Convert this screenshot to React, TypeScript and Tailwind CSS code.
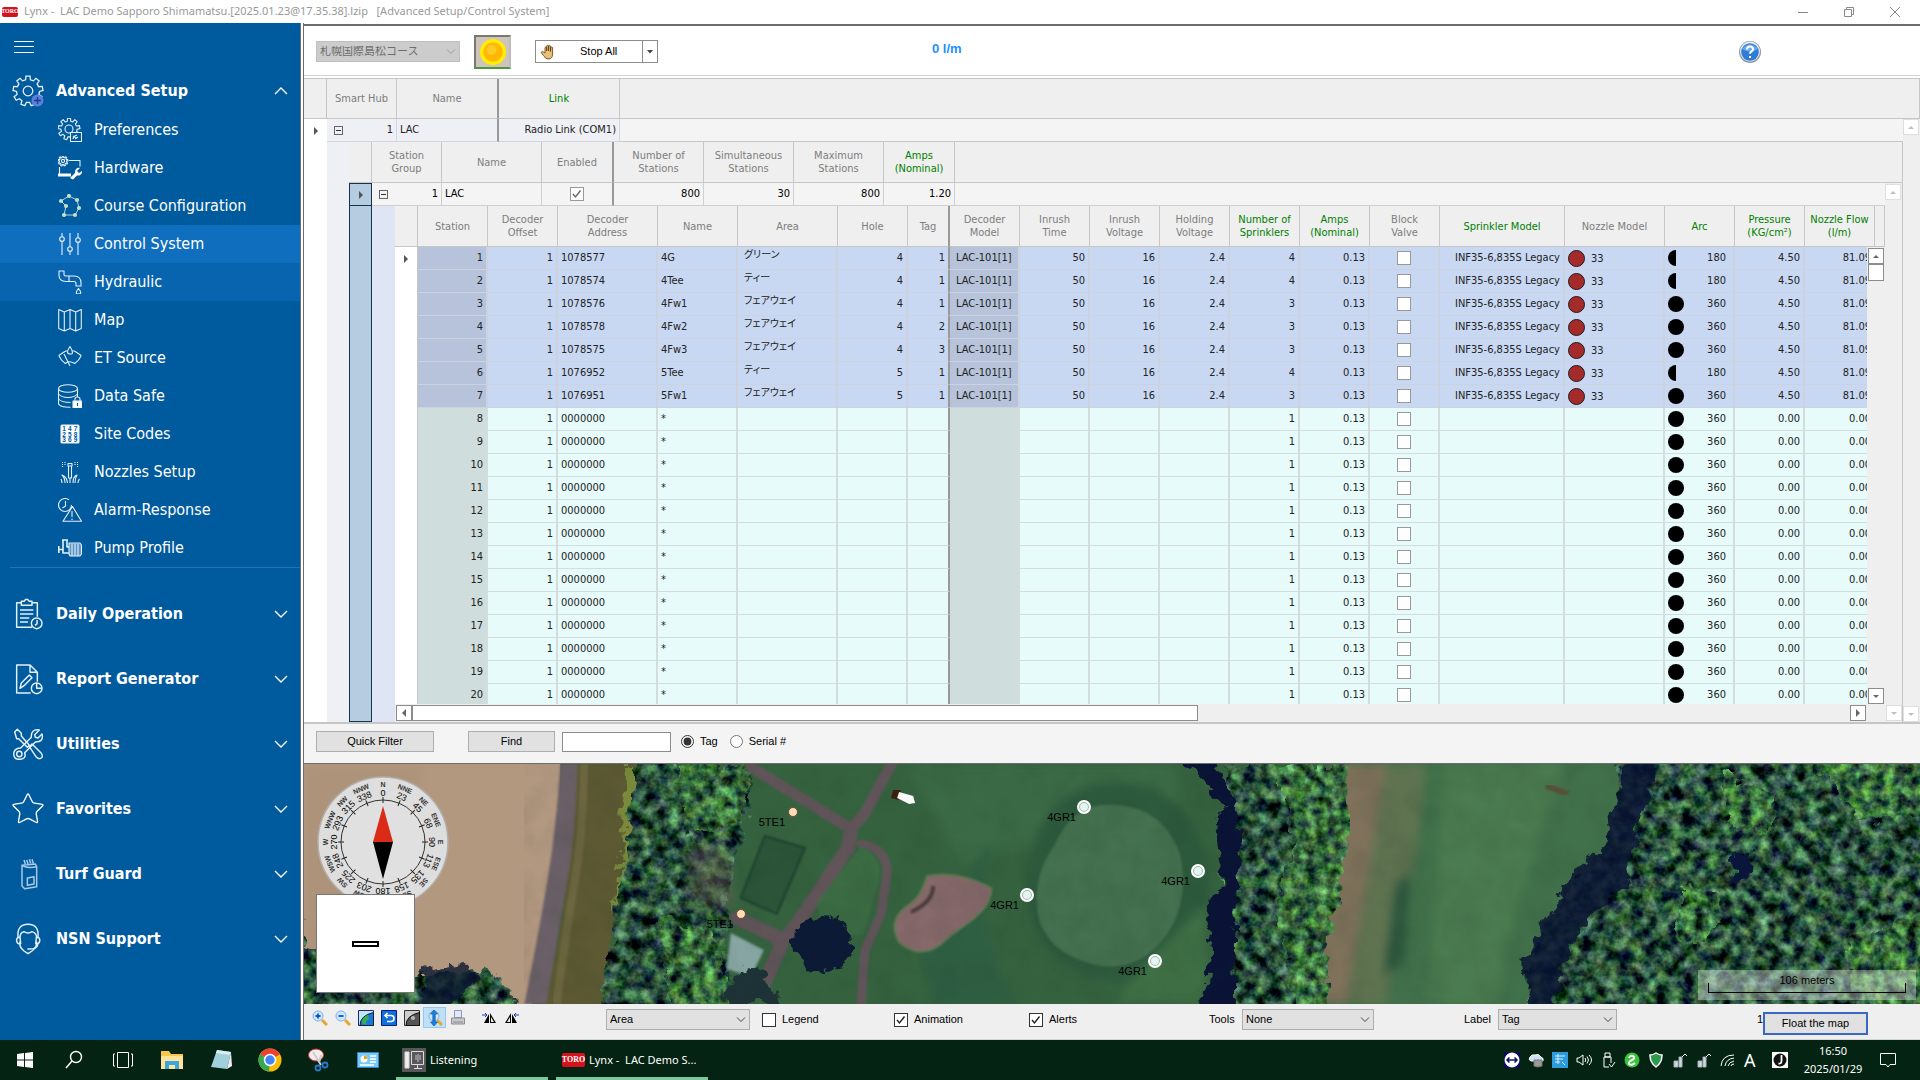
import React from 'react';
import { Star } from 'lucide-react';

type IconProps = { children: React.ReactNode; size?: string };

const gear = (cx: number, cy: number, outer: number, inner: number, teeth: number) => {
  const points: string[] = [];
  const step = (Math.PI * 2) / teeth;
  for (let i = 0; i < teeth; i++) {
    const a = i * step - Math.PI / 2;
    [[-0.3, inner], [-0.2, outer], [0.2, outer], [0.3, inner]].forEach(([offset, r]) => {
      const t = a + offset * step;
      points.push(`${(cx + Math.cos(t) * r).toFixed(2)} ${(cy + Math.sin(t) * r).toFixed(2)}`);
    });
  }
  return `M${points.join('L')}Z`;
};

const Icon = ({ children, size = 'size-6' }: IconProps) => (
  <svg viewBox="0 0 24 24" className={`${size} shrink-0`} fill="none" stroke="#e4f0fa" strokeWidth="1.1" strokeLinejoin="round">
    {children}
  </svg>
);

const subIcons: Record<string, React.ReactNode> = {
  Preferences: (
    <>
      <path d={gear(11, 11, 11, 8, 9)} />
      <circle cx="11" cy="11" r="4" />
      <path d="M12.5 14.5h11v9h-11z" fill="#005a9e" />
      <path d="M15 21c0-3 2-3 4-4M15 18l3 2M17 21l3-2" />
    </>
  ),
  Hardware: (
    <>
      <path d={gear(5, 5, 5, 3.6, 9)} />
      <circle cx="5" cy="5" r="1.6" />
      <path d="M11 4.5h11v6M1.5 11v7" />
      <path d="M0 17.5h13v3H0zM12 22l5-5c-.5-3 2-6 5-5l-3 3 2 2 3-2c.5 3-2 5-5 4.5l-4 4z" fill="#fff" stroke="none" />
    </>
  ),
  'Course Configuration': (
    <>
      <path d="M11 2l8 4 2 8-4 7H6l2-9-5-5z" strokeWidth="0.8" />
      {[[11, 2], [19, 6], [21, 14], [17, 21], [6, 21], [8, 12], [3, 7]].map(([x, y]) => (
        <circle key={`${x}-${y}`} cx={x} cy={y} r="2.1" fill="#bfe3c0" stroke="none" />
      ))}
    </>
  ),
  'Control System': (
    <>
      <path d="M4 1v4M4 9v14M12 1v14M12 19v4M20 1v5M20 10v13" />
      <circle cx="4" cy="7" r="2.3" />
      <circle cx="12" cy="17" r="2.3" />
      <circle cx="20" cy="8" r="2.3" />
    </>
  ),
  Hydraulic: (
    <>
      <path d="M1 1h5v3.5q0 1.500 1.500 1.500H16q7 0 7 7v3h-5v-2.500q0-2-2-2H8Q1 11.500 1 5zM11 6v5.500" />
      <path d="M20.500 18.500q-4.500 5.500 0 5.500t0-5.500z" />
    </>
  ),
  Map: <path d="M.7 1.500l5.600 2.500 5.700-2.500 5.700 2.500 5.600-2.500v19l-5.600 2.500-5.700-2.500-5.700 2.500-5.600-2.500zM6.300 4v19M12 1.500v19M17.700 4v19" />,
  'ET Source': (
    <>
      <path d="M.8 9.500L6 6q2-1.300 3.500-1.300M23.200 9.500L18 6q-2-1.300-3.500-1.300M.8 9.500q2 5 6.500 8 4-3.500 9.400 0 4.500-3 6.500-8M6 8l6 12" />
      <path d="M12 .5q-5 7 0 7.500t0-7.500z" />
    </>
  ),
  'Data Safe': (
    <>
      <ellipse cx="10" cy="4.500" rx="9.500" ry="3.800" />
      <path d="M.5 4.500V20q2 3.500 12 3.300M19.500 4.500V13M.5 10q3 3.500 9.500 3.500T19.500 10M.5 15q3 3.500 12 3.500" />
      <path d="M15 17h9v7h-9z" fill="#fff" />
      <path d="M17 17v-2q0-2 2.500-2t2.500 2v2" />
      <path d="M19.500 19v3" stroke="#005a9e" />
    </>
  ),
  'Site Codes': (
    <>
      <rect x="3" y="3" width="18" height="18" rx="1" fill="#fff" />
      <g fill="#005a9e" stroke="none" fontSize="6.5" fontWeight="bold" fontFamily="Liberation Sans, sans-serif">
        {['147', '258', '369'].map((digits, row) =>
          digits.split('').map((digit, col) => <text key={digit} x={4.2 + col * 5.8} y={8.8 + row * 5.7}>{digit}</text>)
        )}
      </g>
    </>
  ),
  'Nozzles Setup': (
    <>
      <path d="M10 3.500h4v2.500h-4zM10.500 6v12h3V6" />
      <path d="M4.500 2v6M7 2v4M17 2v4M19.500 2v6" strokeDasharray="1 1" />
      <path d="M7 23c0-4-1-6-3-8 3 1 5 3 5.500 8M12 23v-5M15 23c0-4 1-7 4-8-2 3-2 5-2 8M4 23c0-2-.5-3-1-4M20 23c0-2 .5-3 1.500-4" />
    </>
  ),
  'Alarm-Response': (
    <>
      <circle cx="7" cy="7" r="6.500" strokeDasharray="34 7" />
      <path d="M7.500 3v5l-3 2M14.500 8.500L5 23.300h18.500zM14 13v6M14 20.500v1.500" />
    </>
  ),
  'Pump Profile': (
    <>
      <path d="M4 4h6M5 4v13h6M9 4v7h3M.8 10v7M.8 13.500h4" strokeWidth="1.600" />
      <path d="M11 7h11l1.500 2v9L22 20H12l-1-2z" fill="#5b94c4" />
      <path d="M14 8v12M17 8v12M20 8v12" />
    </>
  ),
};

const groupIcons: Record<string, React.ReactNode> = {
  'Daily Operation': (
    <>
      <path d="M15 22H3.500V3.500H7M15 3.500h4V14" />
      <path d="M7 2.500h2q2-3 4 0h2v3H7zM6 9h10M6 12h10M6 15h7M6 18h6" />
      <circle cx="18.500" cy="19" r="4" fill="#005a9e" />
      <path d="M18.800 16.500v2.700l-1.500 1.300" />
    </>
  ),
  'Report Generator': (
    <>
      <path d="M14 22.500H3.500v-21h10l5.500 5.500v7M13.500 1.500V7H19" />
      <path d="M6 19l1-4 6-6 2 2-6 6z" />
      <circle cx="18.500" cy="19" r="4" fill="#005a9e" />
      <path d="M18.500 15v4h4" />
    </>
  ),
  Utilities: (
    <>
      <path d="M2 3l2-2 3 3v2l6 7-1.500 1.500L5 8H3.500zM13 14l2-2 7 7q2 3-1 4-1.500 0-3-1.500z" />
      <path d="M22.500 4.500q1.500 6-5 6l-8 8q1.500 5-4 5-5 0-4-5.500 1-3 5-3l8-8q-.5-6.500 6-5.500l-3.500 3.500.5 2 2 .5z" />
      <circle cx="5.500" cy="19.500" r="2" />
    </>
  ),
  'Turf Guard': (
    <g stroke="#a9cbe8">
      <path d="M7.500 5.500l10-1 1 2v15l-9 1.500-2-2z M7.500 5.500q4 2.500 11 1M10 4.500L9 1.500M12 4.500l-1-3M14 4l-1-3M16 4l-1-3" />
      <path d="M11.500 15l5-1v5.500l-5 1z" />
    </g>
  ),
  'NSN Support': (
    <>
      <path d="M4.500 11q-1-10 7.500-10t7.500 10M6 14q-1 4 3 7l3 2 3-2q4-3 3.500-7" />
      <path d="M6 11q0-4 3-4.500 3 2 6 0 3.500 1 3.500 4.500M6 10.500q-3 .5-2.500 3t3 2zM18.300 10.500q3 .5 2.500 3t-3 2zM19.500 16q-1 3.500-6 3.500h-2" />
    </>
  ),
};

const subItems = Object.keys(subIcons);
const groups = ['Daily Operation', 'Report Generator', 'Utilities', 'Favorites', 'Turf Guard', 'NSN Support'];

const Chevron = ({ up }: { up?: boolean }) => (
  <svg viewBox="0 0 14 8" className="ml-auto h-2 w-3.5" fill="none" stroke="#fff" strokeWidth="1.400">
    <path d={up ? 'M1 7l6-6 6 6' : 'M1 1l6 6 6-6'} />
  </svg>
);

const Toro = ({ className }: { className: string }) => (
  <span className={`flex items-center justify-center rounded-xs bg-[#d4131d] font-['Liberation_Serif',serif] font-bold text-white ${className}`}>TORO</span>
);

const Sidebar = () => (
  <nav className="w-[300px] shrink-0 bg-[#005a9e] pt-[18px] font-['DejaVu_Sans_Condensed','Noto_Sans',sans-serif] text-base text-white">
    <button aria-label="Menu" className="ml-3.5 block">
      <svg viewBox="0 0 20 12" className="h-3 w-5" stroke="#fff"><path d="M0 .5h20M0 5.500h20M0 11.500h20" /></svg>
    </button>
    <button className="mt-[18px] flex h-10 w-full items-center px-3 font-bold">
      <svg viewBox="0 0 32 32" className="mr-3 size-8" fill="none" stroke="#e4f0fa" strokeWidth="1.300">
        <path d={gear(16, 16, 15, 11.5, 9)} />
        <circle cx="16" cy="16" r="4.800" />
        <circle cx="25.500" cy="25.500" r="6" fill="#5a7fe0" stroke="none" />
        <path d="M25.500 22v7M22 25.500h7" stroke="#173f7c" />
      </svg>
      Advanced Setup
      <Chevron up />
    </button>
    <ul>
      {subItems.map(item => (
        <li key={item}>
          <a
            href="#"
            className={`flex h-[38px] items-center gap-3 pl-[58px] ${
              item === 'Control System' ? 'bg-[#106ebe]' : item === 'Hydraulic' ? 'bg-[#0864ae]' : ''
            }`}
          >
            <Icon>{subIcons[item]}</Icon>
            {item}
          </a>
        </li>
      ))}
    </ul>
    <div className="ml-2.5 border-t border-[#2672b0]" />
    <div className="pt-[13px]">
      {groups.map(group => (
        <button key={group} className="flex h-[65px] w-full items-center px-3 font-bold">
          <span className="mr-3 flex w-8 justify-center">
            {group === 'Favorites' ? <Star className="size-9 shrink-0" strokeWidth={0.9} /> : <Icon size="size-8">{groupIcons[group]}</Icon>}
          </span>
          {group}
          <Chevron />
        </button>
      ))}
    </div>
  </nav>
);

const SelectBox = ({ id, value, className, disabled }: { id: string; value: string; className: string; disabled?: boolean }) => (
  <div className={`relative h-[21px] text-[11px] ${className}`}>
    <select
      id={id}
      aria-label={id}
      disabled={disabled}
      className={`h-full w-full appearance-none border pl-[3px] leading-none ${
        disabled ? 'border-[#bfbfbf] bg-[#cccccc] text-[#6d6d6d]' : 'border-[#adadad] bg-[#e1e1e1] text-black'
      }`}
    >
      <option>{value}</option>
    </select>
    <svg viewBox="0 0 10 6" className="pointer-events-none absolute top-2 right-1 h-1.5 w-2.5" fill="none" stroke={disabled ? '#a0a0a0' : '#444'}>
      <path d="M1 .5l4 4 4-4" />
    </svg>
  </div>
);

const Toolbar = () => (
  <div className="flex h-[52px] items-center border-t-2 border-b border-t-[#6d6d6d] border-b-[#d5d5d5] bg-white pt-0.5 pl-3">
    <SelectBox id="Course" value="札幌国際島松コース" disabled className="w-36" />
    <button aria-label="Weather" className="ml-3.5 flex h-[34px] w-[37px] items-center justify-center border-2 border-t-[#777] border-r-[#bbb] border-b-[#4a9a3c] border-l-[#777] bg-[#cfc4ba]">
      <svg viewBox="0 0 28 28" className="size-7">
        <circle cx="14" cy="14" r="13" fill="#ffee00" />
        <circle cx="14" cy="14" r="9.800" fill="#ffb800" />
        <circle cx="12.500" cy="12" r="5" fill="#ffc928" />
      </svg>
    </button>
    <div className="ml-6 flex h-[23px] border border-[#8c8c8c] bg-white text-[11px]">
      <button className="flex w-[106px] items-center pl-1">
        <svg viewBox="0 0 16 16" className="mr-6 size-4" fill="#e9c078" stroke="#5c3c14" strokeWidth="0.800">
          <path d="M5 9V3.500q1-1 1.700 0V7 1.700q1-1 1.900 0V7 2q1-1 1.900 0v5.500l.3-4q1-1 1.800 0V10q0 5-4.500 5Q5.500 15 3.500 11.500L1 8.500q1-1.500 2.500-.5z" />
        </svg>
        Stop All
      </button>
      <button aria-label="More stops" className="flex w-[15px] items-center justify-center border-l border-[#8c8c8c]">
        <svg viewBox="0 0 6 4" className="h-1 w-1.5" fill="#444"><path d="M0 0h6L3 3.500z" /></svg>
      </button>
    </div>
    <div className="ml-[274px] pb-1.5 text-[13px] font-bold text-[#1e90ff]">0 l/m</div>
    <button aria-label="Help" className="mr-[158px] ml-auto">
      <svg viewBox="0 0 24 24" className="size-6">
        <circle cx="12" cy="12" r="11" fill="#8e99a8" />
        <circle cx="12" cy="11.500" r="10" fill="#e8ecf2" />
        <circle cx="12" cy="12" r="8.800" fill="#2f7cd6" />
        <path d="M4 9q8-9 16 0-8 5-16 0z" fill="#69a8ea" />
        <path d="M9 9.500q0-3 3-3t3 2.700q0 1.500-1.600 2.300-1.400.7-1.400 2.300M12 16v2" fill="none" stroke="#fff" strokeWidth="2" />
      </svg>
    </button>
  </div>
);

const Arrow = ({ dir, faint }: { dir: 'up' | 'down' | 'left' | 'right'; faint?: boolean }) => {
  const paths = { up: 'M1 6l3-3 3 3z', down: 'M1 3l3 3 3-3z', left: 'M6 0v8L2 4z', right: 'M2 0v8l4-4z' };
  return (
    <button aria-label={`Scroll ${dir}`} className={`flex size-4 items-center justify-center border bg-white ${faint ? 'border-[#dedede]' : 'border-[#8c8c8c]'}`}>
      <svg viewBox="0 0 8 8" className="size-2" fill={faint ? '#c0c0c0' : '#666'}><path d={paths[dir]} /></svg>
    </button>
  );
};

const Expander = () => (
  <button aria-label="Collapse" className="flex size-[9px] items-center justify-center border border-[#666]">
    <span className="w-[5px] border-t border-[#333]" />
  </button>
);

const RowMark = () => (
  <svg viewBox="0 0 4 8" className="mx-auto h-2 w-1" fill="#555"><path d="M0 0l4 4-4 4z" /></svg>
);

const Tick = ({ id, checked, dark }: { id: string; checked?: boolean; dark?: boolean }) => (
  <span className="relative inline-flex size-3.5 align-middle">
    <input
      type="checkbox"
      id={id}
      aria-label={id}
      defaultChecked={checked}
      className={`size-3.5 appearance-none border bg-white ${dark ? 'border-[#333]' : 'border-[#999]'}`}
    />
    {checked && (
      <svg viewBox="0 0 14 14" className="pointer-events-none absolute inset-0" fill="none" stroke={dark ? '#222' : '#666'} strokeWidth="1.400">
        <path d="M3 7l2.500 3 5-6.500" />
      </svg>
    )}
  </span>
);

const head = 'border-r border-b border-[#c6c6c6] bg-[#efefef] text-center align-middle font-normal leading-[13px]';
const grey = 'text-[#7d7d7d]';
const green = 'text-[#008000]';
const thick = 'border-r-2 border-r-[#999]';

const columns: { label: string; green?: boolean }[] = [
  { label: 'Station' },
  { label: 'Decoder\nOffset' },
  { label: 'Decoder\nAddress' },
  { label: 'Name' },
  { label: 'Area' },
  { label: 'Hole' },
  { label: 'Tag' },
  { label: 'Decoder\nModel' },
  { label: 'Inrush\nTime' },
  { label: 'Inrush\nVoltage' },
  { label: 'Holding\nVoltage' },
  { label: 'Number of\nSprinklers', green: true },
  { label: 'Amps\n(Nominal)', green: true },
  { label: 'Block\nValve' },
  { label: 'Sprinkler Model', green: true },
  { label: 'Nozzle Model' },
  { label: 'Arc', green: true },
  { label: 'Pressure\n(KG/cm²)', green: true },
];

interface Station {
  address: string;
  name: string;
  area: string;
  hole: string;
  tag: string;
  sprinklers: number;
  arc: number;
}

const configured: Station[] = [
  { address: '1078577', name: '4G', area: 'グリーン', hole: '4', tag: '1', sprinklers: 4, arc: 180 },
  { address: '1078574', name: '4Tee', area: 'ティー', hole: '4', tag: '1', sprinklers: 4, arc: 180 },
  { address: '1078576', name: '4Fw1', area: 'フェアウェイ', hole: '4', tag: '1', sprinklers: 3, arc: 360 },
  { address: '1078578', name: '4Fw2', area: 'フェアウェイ', hole: '4', tag: '2', sprinklers: 3, arc: 360 },
  { address: '1078575', name: '4Fw3', area: 'フェアウェイ', hole: '4', tag: '3', sprinklers: 3, arc: 360 },
  { address: '1076952', name: '5Tee', area: 'ティー', hole: '5', tag: '1', sprinklers: 4, arc: 180 },
  { address: '1076951', name: '5Fw1', area: 'フェアウェイ', hole: '5', tag: '1', sprinklers: 3, arc: 360 },
];

const stations: Station[] = [
  ...configured,
  ...Array.from({ length: 13 }, () => ({ address: '0000000', name: '*', area: '', hole: '', tag: '', sprinklers: 1, arc: 360 })),
];

const StationRow = ({ station, index }: { station: Station; index: number }) => {
  const set = index < configured.length;
  const cell = `border-r-2 border-b px-[3px] whitespace-nowrap overflow-hidden ${set ? 'border-[#ccd2e0] bg-[#c9d8f2]' : 'border-[#d3dddd] bg-[#e7fbfb]'}`;
  const fixed = `border-r-2 border-b px-[3px] whitespace-nowrap ${set ? 'border-[#ccd2e0] bg-[#b6c3da]' : 'border-[#d3dddd] bg-[#d0dddd]'}`;
  return (
    <tr className="h-[23px]">
      <td className="border-r border-[#c6c6c6] bg-white">{index === 0 && <RowMark />}</td>
      <td className={`${fixed} text-right`}>{index + 1}</td>
      <td className={`${cell} text-right`}>1</td>
      <td className={cell}>{station.address}</td>
      <td className={cell}>{station.name}</td>
      <td className={`${cell} pl-1.5 align-top text-[10px] [font-feature-settings:'palt']`}>{station.area}</td>
      <td className={`${cell} text-right`}>{station.hole}</td>
      <td className={`${cell} border-r-[#999] text-right`}>{station.tag}</td>
      <td className={`${fixed} pl-1.5`}>{set && 'LAC-101[1]'}</td>
      <td className={`${cell} text-right`}>{set && '50'}</td>
      <td className={`${cell} text-right`}>{set && '16'}</td>
      <td className={`${cell} text-right`}>{set && '2.4'}</td>
      <td className={`${cell} text-right`}>{station.sprinklers}</td>
      <td className={`${cell} text-right`}>0.13</td>
      <td className={`${cell} text-center leading-none`}><Tick id={`Block valve ${index + 1}`} /></td>
      <td className={`${cell} text-right`}>{set && 'INF35-6,835S Legacy'}</td>
      <td className={cell}>
        {set && (
          <span className="flex items-center gap-1.5 leading-[17px]">
            <span className="size-[17px] rounded-full border border-[#1c1c1c] bg-[#a52a2a]" />
            33
          </span>
        )}
      </td>
      <td className={cell}>
        <span className="flex items-center justify-between pr-1 leading-4">
          <svg viewBox="0 0 16 16" className="size-4">
            {station.arc === 180 ? <path d="M8 0a8 8 0 0 0 0 16z" /> : <circle cx="8" cy="8" r="8" />}
          </svg>
          {station.arc}
        </span>
      </td>
      <td className={`${cell} text-right`}>{set ? '4.50' : '0.00'}</td>
      <td className={`border-b ${set ? 'border-[#ccd2e0] bg-[#c9d8f2]' : 'border-[#d3dddd] bg-[#e7fbfb]'}`}>
        <div className="flex justify-end overflow-hidden">
          <span className="-mr-1 shrink-0">{set ? '81.09' : '0.00'}</span>
        </div>
      </td>
      {index === 0 && (
        <td rowSpan={20} colSpan={2} className="bg-[#efefef] p-0 align-top">
          <div className="flex h-[457px] flex-col items-center pt-px">
            <Arrow dir="up" />
            <div className="h-[17px] w-4 border border-[#8c8c8c] bg-white" />
            <div className="mt-auto"><Arrow dir="down" /></div>
          </div>
        </td>
      )}
    </tr>
  );
};

const StationTable = () => (
  <>
    <div className="h-[498px] overflow-hidden">
      <table className="w-full table-fixed border-separate border-spacing-0">
        <colgroup>
          <col className="w-[23px]" />
          <col className="w-[70px]" />
          <col className="w-[70px]" />
          <col className="w-[100px]" />
          <col className="w-[80px]" />
          <col className="w-[100px]" />
          <col className="w-[70px]" />
          <col className="w-[42px]" />
          <col className="w-[70px]" />
          <col className="w-[70px]" />
          <col className="w-[70px]" />
          <col className="w-[70px]" />
          <col className="w-[70px]" />
          <col className="w-[70px]" />
          <col className="w-[70px]" />
          <col />
          <col className="w-[100px]" />
          <col className="w-[70px]" />
          <col className="w-[70px]" />
          <col className="w-[62px]" />
          <col className="w-[8px]" />
          <col className="w-[10px]" />
        </colgroup>
        <thead>
          <tr className="h-[41px]">
            <th className={head} />
            {columns.map(col => (
              <th key={col.label} className={`${head} whitespace-pre-line ${col.green ? green : grey} ${col.label === 'Tag' ? thick : ''}`}>{col.label}</th>
            ))}
            <th colSpan={2} className={`${head} ${green} whitespace-pre`}>{'Nozzle Flow\n(l/m)'}</th>
            <th className={head} />
          </tr>
        </thead>
        <tbody className="text-[#222]">
          {stations.map((station, i) => <StationRow key={i} station={station} index={i} />)}
        </tbody>
      </table>
    </div>
    <div className="flex h-[18px] items-center bg-[#efefef] pr-[19px] pl-px">
      <Arrow dir="left" />
      <div className="h-4 w-[786px] border border-[#8c8c8c] bg-white" />
      <div className="ml-auto"><Arrow dir="right" /></div>
    </div>
  </>
);

const GroupTable = () => {
  const cell = 'border-r border-b border-[#cfcfcf] bg-[#f4f4f4] px-[3px] text-black';
  return (
    <table className="w-full table-fixed border-separate border-spacing-0">
      <colgroup>
        <col className="w-[23px]" />
        <col className="w-[70px]" />
        <col className="w-[100px]" />
        <col className="w-[72px]" />
        <col className="w-[90px]" />
        <col className="w-[90px]" />
        <col className="w-[90px]" />
        <col className="w-[71px]" />
        <col />
        <col className="w-[18px]" />
      </colgroup>
      <thead>
        <tr className="h-[41px]">
          <th className={head} />
          <th className={`${head} ${grey} whitespace-pre-line`}>{'Station\nGroup'}</th>
          <th className={`${head} ${grey}`}>Name</th>
          <th className={`${head} ${grey} ${thick}`}>Enabled</th>
          <th className={`${head} ${grey} whitespace-pre-line`}>{'Number of\nStations'}</th>
          <th className={`${head} ${grey} whitespace-pre-line`}>{'Simultaneous\nStations'}</th>
          <th className={`${head} ${grey} whitespace-pre-line`}>{'Maximum\nStations'}</th>
          <th className={`${head} ${green} whitespace-pre-line`}>{'Amps\n(Nominal)'}</th>
          <th colSpan={2} className={head} />
        </tr>
      </thead>
      <tbody>
        <tr className="h-[23px]">
          <td className="border border-[#16344f] bg-[#b5cce1]"><RowMark /></td>
          <td className={cell}><span className="flex items-center justify-between pl-1"><Expander />1</span></td>
          <td className={`${cell} text-left`}>LAC</td>
          <td className={`${cell} ${thick} text-center leading-none`}><Tick id="Enabled" checked /></td>
          <td className={`${cell} text-right`}>800</td>
          <td className={`${cell} text-right`}>30</td>
          <td className={`${cell} text-right`}>800</td>
          <td className={`${cell} text-right`}>1.20</td>
          <td className="border-b border-[#cfcfcf] bg-[#f4f4f4]" />
          <td className="border-r border-[#c6c6c6] bg-[#efefef] pt-px align-top"><Arrow dir="up" faint /></td>
        </tr>
        <tr>
          <td className="border border-t-0 border-[#16344f] bg-[#b5cce1]" />
          <td colSpan={8} className="bg-[#dfe5f5] pl-[23px]"><StationTable /></td>
          <td className="border-r border-[#c6c6c6] bg-[#efefef] p-px align-bottom"><Arrow dir="down" faint /></td>
        </tr>
      </tbody>
    </table>
  );
};

const HubTable = () => {
  const cell = 'border-r border-b border-[#d3d6de] bg-[#eef0f5] px-[3px] text-[#222]';
  return (
    <table className="mt-0.5 w-full table-fixed border-separate border-spacing-0 border-t border-b-2 border-[#c6c6c6] font-['DejaVu_Sans_Condensed','Noto_Sans_CJK_JP',sans-serif] text-[11px]">
      <colgroup>
        <col className="w-[23px]" />
        <col className="w-[70px]" />
        <col className="w-[102px]" />
        <col className="w-[121px]" />
        <col />
        <col className="w-[17px]" />
      </colgroup>
      <thead>
        <tr className="h-[40px]">
          <th className={head} />
          <th className={`${head} ${grey}`}>Smart Hub</th>
          <th className={`${head} ${grey} ${thick}`}>Name</th>
          <th className={`${head} ${green}`}>Link</th>
          <th colSpan={2} className={head} />
        </tr>
      </thead>
      <tbody>
        <tr className="h-[23px]">
          <td className="bg-white"><RowMark /></td>
          <td className={cell}><span className="flex items-center justify-between pl-1"><Expander />1</span></td>
          <td className={`${cell} ${thick} text-left`}>LAC</td>
          <td className={`${cell} text-right whitespace-nowrap`}>Radio Link (COM1)</td>
          <td className="border-b border-[#c6c6c6] bg-[#f4f4f4]" />
          <td className="bg-[#efefef] align-top"><Arrow dir="up" faint /></td>
        </tr>
        <tr>
          <td className="bg-white" />
          <td colSpan={4} className="bg-[#eef0f5] pl-[22px]"><GroupTable /></td>
          <td className="bg-[#efefef] align-bottom"><Arrow dir="down" faint /></td>
        </tr>
      </tbody>
    </table>
  );
};

const FilterBar = () => (
  <div className="flex h-[39px] items-center bg-[#f4f4f4] pb-1 pl-3 text-[11px]">
    <button className="h-[21px] w-[118px] border border-[#adadad] bg-[#e1e1e1]">Quick Filter</button>
    <button className="ml-[34px] h-[21px] w-[87px] border border-[#adadad] bg-[#e1e1e1]">Find</button>
    <input aria-label="Find text" className="ml-[7px] h-5 w-[109px] border border-[#8c8c8c] bg-white" />
    <label className="ml-2.5 flex items-center gap-1.5">
      <input type="radio" name="by" defaultChecked className="size-[13px] accent-[#333]" />
      Tag
    </label>
    <label className="ml-3 flex items-center gap-1.5">
      <input type="radio" name="by" className="size-[13px]" />
      Serial #
    </label>
  </div>
);

const headings = [
  ['N', '0'], ['NNE', '23'], ['NE', '45'], ['ENE', '68'], ['E', '90'], ['ESE', '113'], ['SE', '135'], ['SSE', '158'],
  ['S', '180'], ['SSW', '203'], ['SW', '225'], ['WSW', '248'], ['W', '270'], ['WNW', '293'], ['NW', '315'], ['NNW', '338'],
];

const Compass = () => (
  <svg viewBox="-66 -66 132 132" className="absolute top-3 left-[13px] size-[132px]" textAnchor="middle" fontFamily="Liberation Sans, sans-serif">
    <circle r="65" fill="#dedede" stroke="#b4aea8" strokeWidth="1.500" />
    <circle r="42" fill="#e0e0e0" stroke="#333" />
    {headings.map(([name, deg], i) => (
      <g key={deg} transform={`rotate(${i * 22.5})`}>
        <path d="M0-45v6" stroke="#222" />
        <text y="-46" fontSize="9">{deg}</text>
        <text y="-55" fontSize="7" fontWeight="bold" fill="#333">{name}</text>
      </g>
    ))}
    <path d="M0-36L10 0h-20z" fill="#d92b17" />
    <path d="M0 37L10 0h-20z" />
  </svg>
);

const Terrain = () => (
  <svg viewBox="0 0 1613 240" preserveAspectRatio="none" className="absolute inset-0 h-full w-full" colorInterpolationFilters="sRGB">
    <defs>
      <filter id="canopy" x="0" y="0" width="100%" height="100%">
        <feTurbulence type="fractalNoise" baseFrequency="0.08" numOctaves="4" seed="7" result="noise" />
        <feColorMatrix in="noise" type="matrix" values="0.9 0 0 0 -0.29  1.2 0.3 0 0 -0.44  0.7 0 0.3 0 -0.27  0 0 0 0 1" result="leaves" />
        <feComposite in="leaves" in2="SourceGraphic" operator="in" />
      </filter>
      <filter id="canopyBright" x="0" y="0" width="100%" height="100%">
        <feTurbulence type="fractalNoise" baseFrequency="0.09" numOctaves="4" seed="3" result="noise" />
        <feColorMatrix in="noise" type="matrix" values="0.8 0 0 0 -0.18  1.2 0.3 0 0 -0.33  0.5 0 0.3 0 -0.16  0 0 0 0 1" result="leaves" />
        <feComposite in="leaves" in2="SourceGraphic" operator="in" />
      </filter>
      <filter id="grain" x="0" y="0" width="100%" height="100%">
        <feTurbulence type="fractalNoise" baseFrequency="0.035" numOctaves="4" seed="12" />
        <feColorMatrix type="matrix" values="0 0 0 0 0.08  0 0 0 0 0.16  0 0 0 0 0.14  0.9 0 0 0 -0.3" />
      </filter>
      <filter id="ragged" x="-10%" y="-10%" width="120%" height="120%">
        <feTurbulence type="fractalNoise" baseFrequency="0.07" numOctaves="3" seed="5" result="edge" />
        <feDisplacementMap in="SourceGraphic" in2="edge" scale="20" xChannelSelector="R" yChannelSelector="G" />
        <feGaussianBlur stdDeviation="0.700" />
      </filter>
      <filter id="soft" x="-20%" y="-20%" width="140%" height="140%"><feGaussianBlur stdDeviation="5" /></filter>
      <filter id="edge" x="-10%" y="-10%" width="120%" height="120%"><feGaussianBlur stdDeviation="1.200" /></filter>
    </defs>
    <rect width="1613" height="240" fill="#36633f" />
    {/* rough around the green */}
    <g filter="url(#soft)">
      <path d="M600 0h270v60l-80-40-60 60-70 20z" fill="#3b6b46" />
      <path d="M690 70q-30 80 20 170h-80l-20-60z" fill="#2f5f43" />
      <ellipse cx="812" cy="118" rx="92" ry="100" fill="#2d5a3d" />
      <path d="M840 200l60-60v100h-90z" fill="#3f7045" />
    </g>
    <path d="M795 41q60-4 79 48 12 50-17 87-24 30-60 26-50-8-63-45-10-40 15-76 16-36 46-40z" fill="#44714f" filter="url(#edge)" />
    {/* tan field, track and verge */}
    <path d="M0 0h256q0 60-6 100-8 60-23 140H0z" fill="#b39880" />
    <path d="M0 0h120l-40 240H0z" fill="#a88d75" opacity="0.4" filter="url(#soft)" />
    <path d="M260 0h76q-4 70-20 110-10 70-20 140h-58q18-80 22-120 4-50 3-120z" fill="#5d5a33" filter="url(#edge)" />
    <path d="M256 0h17q-2 70-9 110-10 60-22 130h-22q16-80 24-130 8-50 12-110z" fill="#6b6067" filter="url(#edge)" />
    <path d="M280 0q-2 80-12 130-8 50-16 110" stroke="#79704a" strokeWidth="8" fill="none" opacity="0.600" filter="url(#edge)" />
    <path d="M318 0h16q-4 90-26 150 12-70 10-150z" fill="#7c8b3b" filter="url(#ragged)" />
    <g filter="url(#canopy)">
      <g filter="url(#ragged)">
        <path d="M332 0h118l-10 60-14 60-4 60 8 70H294l18-110z" />
        <path d="M-10 146q14 10 10 36l110 30 60-8q40 10 44 40H-10z" />
      </g>
    </g>
    <g filter="url(#canopyBright)">
      <g filter="url(#ragged)">
        <path d="M372 0h76l-14 60-54 10zM350 150l60 20 20 80h-60z" />
      </g>
    </g>
    <path d="M385 90q20-20 40 0l4 50q-30 10-44-10z" fill="#6b6657" opacity="0.500" filter="url(#soft)" />
    <path d="M120 208l40-10 14 12-20 30h-34z" fill="#0c1830" opacity="0.800" filter="url(#ragged)" />
    {/* cart paths */}
    <g fill="none" stroke="#62555a" strokeLinecap="round" filter="url(#edge)">
      <path d="M446 3l100 62 14-16 28-52" strokeWidth="11" />
      <path d="M546 64l-3 20-48 72-14 18" strokeWidth="14" />
      <path d="M556 80q26 4 26 30l-6 40-16 36-4 54" strokeWidth="9" />
      <path d="M432 154l38 18 6 10-16 36" strokeWidth="14" />
    </g>
    <path d="M460 72l40 12-28 66-36-16z" fill="#2b5438" stroke="#1f4030" strokeWidth="2" filter="url(#edge)" />
    <path d="M512 138l44-56q22 10 18 34l-16 54-40 4z" fill="#3e7046" opacity="0.700" filter="url(#edge)" />
    <path d="M426 169l33 17-13 27-24-8z" fill="#86a5a3" filter="url(#edge)" />
    <ellipse cx="517" cy="180" rx="29" ry="27" fill="#0c1a36" filter="url(#ragged)" />
    <path d="M420 240l10-30 20-8 30 38z" fill="#1e3337" filter="url(#ragged)" />
    {/* bunker and hut */}
    <path d="M622 112q30-6 64 12 2 16-22 34-20 14-28 22-22 16-42-2-12-22 8-36 14-8 20-30z" fill="#86696a" stroke="#657a53" strokeWidth="2" filter="url(#edge)" />
    <path d="M628 122q0 16-22 26" stroke="#4b3c3a" strokeWidth="4" fill="none" filter="url(#edge)" />
    <path d="M588 26l8 0-2 10-8-2z" fill="#3d1f10" />
    <path d="M594 28l14 4 2 7-6 1-12-6z" fill="#fff" />
    {/* middle tree belt */}
    <path d="M1026 0h290v240H1012q0-60 14-110 10-60 0-130z" fill="#41714a" />
    <g filter="url(#soft)">
      <path d="M1026 0h60q-10 120-30 240h-50z" fill="#80725a" />
      <path d="M1080 0h40q-10 120-40 240h-40z" fill="#5f7350" />
      <path d="M1140 0h120q-50 120-70 240h-70z" fill="#4b7b50" />
      <path d="M1090 120l14-10-6 90-20 10z" fill="#2d573e" />
    </g>
    <path d="M1240 22l22 8" stroke="#5a5238" strokeWidth="6" filter="url(#edge)" />
    <g filter="url(#canopyBright)">
      <path d="M920 0h118l6 66-10 70-14 40 2 74H908z" filter="url(#ragged)" />
    </g>
    <g filter="url(#canopy)">
      <path d="M920 0h50l20 80-20 60 20 110h-80z" filter="url(#ragged)" />
    </g>
    <path d="M876-5h30l22 40 8 50-6 50-2 110h-34l12-50-4-46 16-30-10-60 14-16-20-20z" fill="#0a1336" filter="url(#ragged)" />
    {/* eastern woods */}
    <g filter="url(#canopy)">
      <path d="M1314-5h320v265H1226l-10-50 40-80 44-50z" filter="url(#ragged)" />
    </g>
    <g filter="url(#canopyBright)">
      <g filter="url(#ragged)">
        <path d="M1380 120l30 10 4 30-20 20-30-10z" />
        <path d="M1540 170l50-10 40-30v130h-80z" />
        <path d="M1420 10l50 20-10 40-40-10z" />
        <path d="M1500-5h130v55l-70 6z" />
      </g>
    </g>
    <path d="M1320-5h34l-22 65-14 60-40 40-22 40-8 50h-22l-10-50 42-80 40-40z" fill="#0a1434" opacity="0.850" filter="url(#ragged)" />
    <path d="M1424 88l22 2-6 26-14 6z" fill="#09153a" filter="url(#ragged)" />
    <path d="M256 0h1060l-100 240H220z" filter="url(#grain)" opacity="0.200" />
  </svg>
);

const pins = [
  { label: '4GR1', left: 780, top: 43, green: true },
  { label: '4GR1', left: 894, top: 107, green: true },
  { label: '4GR1', left: 723, top: 131, green: true },
  { label: '4GR1', left: 851, top: 197, green: true },
  { label: '5TE1', left: 489, top: 48, green: false },
  { label: '5TE1', left: 437, top: 150, green: false },
];

const CourseMap = () => (
  <div className="relative min-h-[240px] flex-1 overflow-hidden border-t border-[#6d6d6d] font-['Liberation_Sans',sans-serif] text-[11px] text-black">
    <Terrain />
    {pins.map(pin => (
      <div key={`${pin.left}-${pin.top}`} className="absolute" style={{ left: pin.left, top: pin.top }}>
        <span
          className={`absolute -translate-1/2 rounded-full ${
            pin.green ? 'size-3.5 border-2 border-white bg-[#e2f5ee] ring-1 ring-[#9aaea4] ring-inset' : 'size-2.5 border border-[#6b4a32] bg-[#ffdcb8]'
          }`}
        />
        <span className="absolute top-1 right-2 leading-3">{pin.label}</span>
      </div>
    ))}
    <Compass />
    <div className="absolute top-[130px] left-3 flex h-[99px] w-[99px] items-center justify-center border border-[#777] bg-white">
      <span className="h-1.5 w-[27px] border-2 border-black" />
    </div>
    <div className="absolute right-1 bottom-1 h-[30px] w-[218px] bg-white/35 px-2.5 pt-0.5 text-center">
      106 meters
      <div className="-mt-1.5 h-2.5 border-x border-b border-black" />
    </div>
  </div>
);

const mapTools: { label: string; art: React.ReactNode }[] = [
  { label: 'Zoom in', art: <><path d="M10 10l5 5" stroke="#e8a530" strokeWidth="3" /><circle cx="6" cy="6" r="5" fill="#cfe6ff" stroke="#7fb2e8" /><path d="M3.500 6h5M6 3.500v5" stroke="#0a57c8" strokeWidth="1.800" /></> },
  { label: 'Zoom out', art: <><path d="M10 10l5 5" stroke="#e8a530" strokeWidth="3" /><circle cx="6" cy="6" r="5" fill="#cfe6ff" stroke="#7fb2e8" /><path d="M3.500 6h5" stroke="#0a57c8" strokeWidth="1.800" /></> },
  { label: 'Whole world', art: <><path d="M.5.5h15v15H.5z" fill="#bfe6fb" stroke="#1b2a6b" /><path d="M2 15.500q0-10 13.500-13v13z" fill="#1878dc" stroke="#123" /><path d="M4 13q0-6 6-8l1 4-3 2v4z" fill="#36b14a" /></> },
  { label: 'Undo', art: <><path d="M.5.5h15v15H.5z" fill="#0f6fdc" stroke="#0a1d7a" /><path d="M4 5.500h6q3 0 3 3t-3 3H6M6.500 3L4 5.500 6.500 8" fill="none" stroke="#fff" strokeWidth="1.600" /></> },
  { label: 'Grey world', art: <><path d="M.5.5h15v15H.5z" fill="#ccc" stroke="#333" /><path d="M2 15.500q0-10 13.500-13v13z" fill="#555" stroke="#111" /><circle cx="9" cy="8" r="2" fill="#bbb" /></> },
  { label: 'Fit', art: <><path d="M10 10l5 5" stroke="#e8a530" strokeWidth="3" /><circle cx="7" cy="6" r="5" fill="#cfe6ff" stroke="#7fb2e8" /><path d="M7 0l3.500 4H8.200v8h2.300L7 16l-3.500-4h2.300V4H3.500z" fill="#1583e8" stroke="#0a4a96" strokeWidth="0.600" /></> },
  { label: 'Print', art: <><path d="M4.500.5h7v7h-7z" fill="#dfe9fa" stroke="#8a97b5" /><path d="M1.500 8h13v6h-13z" fill="#c9c9cc" stroke="#8d8d92" /><path d="M3 12h10" stroke="#888" /></> },
];

const MapBar = () => (
  <div className="flex h-9 items-center border-b border-[#d5d5d5] bg-[#efefef] pb-1 pl-1 text-[11px] text-black">
    {mapTools.map(tool => (
      <button
        key={tool.label}
        aria-label={tool.label}
        className={`mb-1 flex h-[21px] w-[23px] items-center justify-center ${tool.label === 'Fit' ? 'border border-[#90c8f6] bg-[#bfe0f7]' : ''}`}
      >
        <svg viewBox="0 0 16 16" className="size-4">{tool.art}</svg>
      </button>
    ))}
    <button aria-label="Mirror left" className="mb-1 ml-2 flex w-[23px] justify-center">
      <svg viewBox="0 0 16 12" className="h-3 w-4">
        <path d="M8 2v9H3zM9 1l6 10H9z" />
        <path d="M10 5l3 5h-3z" fill="#efefef" />
        <path d="M1 3h5M4 1l2 2-2 2" stroke="#1a3fc0" fill="none" />
      </svg>
    </button>
    <button aria-label="Mirror right" className="mb-1 flex w-[23px] justify-center">
      <svg viewBox="0 0 16 12" className="h-3 w-4">
        <path d="M7 1v10H1zM8 2v9h5z" />
        <path d="M6 5v5H3z" fill="#efefef" />
        <path d="M15 3h-5M12 1l-2 2 2 2" stroke="#1a3fc0" fill="none" />
      </svg>
    </button>
    <SelectBox id="View" value="Area" className="ml-[83px] w-[144px]" />
    <label htmlFor="Legend" className="ml-3 flex w-[132px] items-center gap-1.5"><Tick id="Legend" dark />Legend</label>
    <label htmlFor="Animation" className="flex w-[135px] items-center gap-1.5"><Tick id="Animation" dark checked />Animation</label>
    <label htmlFor="Alerts" className="flex w-[180px] items-center gap-1.5"><Tick id="Alerts" dark checked />Alerts</label>
    <label htmlFor="Tools" className="w-[33px]">Tools</label>
    <SelectBox id="Tools" value="None" className="w-[132px]" />
    <label htmlFor="Label" className="ml-[90px] w-[34px]">Label</label>
    <SelectBox id="Label" value="Tag" className="w-[119px]" />
    <span className="ml-auto">1</span>
    <button className="mt-2 mr-[52px] h-[23px] w-[105px] border-2 border-[#3a66c4] bg-[#e1e1e1]">Float the map</button>
  </div>
);

const TaskIcon = ({ label, children }: { label: string; children: React.ReactNode }) => (
  <button aria-label={label} className="flex w-[49px] justify-center">
    <svg viewBox="0 0 24 24" className="size-6" fill="none">{children}</svg>
  </button>
);

const TrayIcon = ({ children }: { children: React.ReactNode }) => (
  <svg viewBox="0 0 16 16" className="mr-2 size-4" fill="none" stroke="#fff">{children}</svg>
);

const Taskbar = () => (
  <footer className="flex h-10 shrink-0 items-center bg-[#042312] font-['Noto_Sans',sans-serif] text-[11px] text-white">
    <TaskIcon label="Start"><path d="M4 6l7-1v6.500H4zM12 5l8-1v7.500h-8zM4 12.500h7V19l-7-1zM12 12.500h8V20l-8-1z" fill="#fff" /></TaskIcon>
    <TaskIcon label="Search"><circle cx="14" cy="9" r="5.500" stroke="#fff" strokeWidth="1.400" /><path d="M10 13l-6 7" stroke="#fff" strokeWidth="1.400" /></TaskIcon>
    <TaskIcon label="Task view"><path d="M6.500 4.500h11v15h-11zM4 6H2.500v12H4M20 6h1.500v12H20" stroke="#fff" /></TaskIcon>
    <TaskIcon label="Explorer"><path d="M1 3h8l2 3h12v15H1z" fill="#f6c94e" /><path d="M1 8h22v13H1z" fill="#ffe39a" /><path d="M5 21v-8h14v8h-4v-4H9v4z" fill="#39a6e0" /></TaskIcon>
    <TaskIcon label="Notes"><path d="M8 2l14 2-4 17-16-2z" fill="#9fd0dc" /><path d="M18 21l4-17 1 14z" fill="#eee" /><path d="M8 2l14 2-1 3L7 5z" fill="#d9edf2" /></TaskIcon>
    <TaskIcon label="Chrome">
      <circle cx="12" cy="12" r="11.500" fill="#fbbc05" />
      <path d="M12 12L2 6.200A11.500 11.500 0 0 1 22 6.200z" fill="#ea4335" />
      <path d="M12 12L2 6.200A11.500 11.500 0 0 0 11 23.500z" fill="#34a853" />
      <circle cx="12" cy="12" r="5.500" fill="#4285f4" stroke="#fff" strokeWidth="1.500" />
    </TaskIcon>
    <TaskIcon label="Snip"><ellipse cx="9" cy="7" rx="7.500" ry="6" fill="#f5eeee" stroke="#c33" /><path d="M6 4l8 13M14 7l-2 8" stroke="#ccc" strokeWidth="2" /><circle cx="11" cy="20" r="2.500" stroke="#2b78c8" strokeWidth="1.800" /><circle cx="18" cy="17" r="2.500" stroke="#2b78c8" strokeWidth="1.800" /></TaskIcon>
    <TaskIcon label="Panel"><path d="M1.500 4.500h21v15h-21z" fill="#7cc8f5" stroke="#2a86cc" /><circle cx="8" cy="11" r="3.500" fill="#fff" /><path d="M8 11V7.500A3.500 3.500 0 0 1 11.500 11z" fill="#f3a01e" /><path d="M14 8h6M14 11h6M14 14h6M4 17h14" stroke="#fff" strokeWidth="1.500" /></TaskIcon>
    <button className="ml-1 flex h-full w-[152px] items-center border-b-[3px] border-[#7cc79c] pt-[3px] pl-1.5">
      <svg viewBox="0 0 24 24" className="mr-1 size-6" fill="none" stroke="#ddd">
        <path d="M0 0h24v24H0z" fill="#58585a" stroke="none" />
        <path d="M3 4h4v16H3z" fill="#eee" />
        <path d="M9.500 3.500h12v13h-12zM12 20.500h8M15.500 17v3" />
        <path d="M14 7v5M16 6v8M18 7v5" strokeWidth="0.800" />
      </svg>
      Listening
    </button>
    <button className="ml-2 flex h-full w-[152px] items-center border-b-[3px] border-[#7cc79c] pt-[3px] pl-1.5 whitespace-pre">
      <Toro className="mr-1 h-3.5 w-[23px] text-[8px]" />
      {'Lynx -  LAC Demo S...'}
    </button>
    <div className="ml-auto flex items-center">
      <TrayIcon><path d="M0 0h16v16H0z" fill="#0a0a5c" stroke="none" /><circle cx="8" cy="8" r="7" fill="#fff" /><path d="M3 8h10M5.500 5.500L3 8l2.500 2.500M10.500 5.500L13 8l-2.500 2.500" stroke="#0a1460" strokeWidth="1.500" /></TrayIcon>
      <TrayIcon><path d="M3 9q-3-1-1-4 2-3 5-2 4-2 6 2 3 1 2 4z" fill="#cfe2f5" /><path d="M6 8h8v6q-4 2-8 0z" fill="#9a9a9a" stroke="#777" /></TrayIcon>
      <TrayIcon><path d="M0 0h16v16H0z" fill="#2c9be0" stroke="none" /><path d="M3 4h10M3 7h8M3 10h5M10 10l3 3M6 2v10" stroke="#d8f0ff" /></TrayIcon>
      <TrayIcon><path d="M1 6h2l4-3v10l-4-3H1zM9 6q1.500 2 0 4M11 4.500q3 3.500 0 7M13 3q5 5 0 10" /></TrayIcon>
      <TrayIcon><path d="M5 1h5v4H5zM4 5h7v6M4 5v10h5M9 12l2.500 3L15 10" /></TrayIcon>
      <TrayIcon><circle cx="8" cy="8" r="7.500" fill="#38c438" stroke="none" /><path d="M5 6q1-3 4-2 3 2-1 4t-3 4q3 2 6-1" strokeWidth="2" /></TrayIcon>
      <TrayIcon><path d="M8 1q3 2 6 2 0 8-6 12Q2 11 2 3q3 0 6-2z" fill="#2f9a4c" strokeWidth="1.500" /></TrayIcon>
      <TrayIcon><path d="M2 9h4v6H2zM7 5h3v10H7z" fill="#cfd8dc" stroke="#9fb0b8" /><path d="M10 5l3-3 2 2" /></TrayIcon>
      <TrayIcon><path d="M2 9h4v6H2zM7 5h3v10H7z" fill="#cfd8dc" stroke="#9fb0b8" /><path d="M10 5l3-3 2 2" /></TrayIcon>
      <TrayIcon><path d="M1 14Q2 3 14 3M5 14q1-7 9-8M8 14q1-4 6-5M11 14q0-2 3-2" /></TrayIcon>
      <span className="mr-3 w-4 text-lg leading-none">A</span>
      <TrayIcon><path d="M0 0h16v16H0z" fill="#fff" stroke="none" /><circle cx="8" cy="8" r="6.500" fill="#111" stroke="none" /><path d="M9.500 3v6q0 3-3 2.500" strokeWidth="1.800" /></TrayIcon>
      <div className="w-[74px] text-center leading-[18px]">16:50<br />2025/01/29</div>
      <svg viewBox="0 0 16 16" className="mr-6 ml-2.5 size-4" fill="none" stroke="#fff"><path d="M.5 1.500h15v11H10L8 15l-2-2.500H.5z" /></svg>
    </div>
  </footer>
);

const TitleBar = () => (
  <header className="flex h-[23px] items-center bg-white pl-0.5 font-['Noto_Sans',sans-serif] text-[11px] text-[#999]">
    <Toro className="mr-1.5 h-2.5 w-4 text-[6px]" />
    <h1 className="whitespace-pre">{'Lynx -  LAC Demo Sapporo Shimamatsu.[2025.01.23@17.35.38].lzip   [Advanced Setup/Control System]'}</h1>
    <div className="mr-5 ml-auto flex gap-9">
      <button aria-label="Minimise"><svg viewBox="0 0 10 10" className="size-2.5" stroke="#888"><path d="M0 5.500h10" /></svg></button>
      <button aria-label="Restore"><svg viewBox="0 0 10 10" className="size-2.5" fill="none" stroke="#888"><path d="M.5 2.500h7v7h-7zM2.500 2.500v-2h7v7h-2" /></svg></button>
      <button aria-label="Close"><svg viewBox="0 0 10 10" className="size-2.5" stroke="#888"><path d="M0 0l10 10M10 0L0 10" /></svg></button>
    </div>
  </header>
);

export default function App() {
  return (
    <div className="flex min-h-screen flex-col bg-white">
      <TitleBar />
      <div className="flex flex-1">
        <Sidebar />
        <main className="flex min-w-0 flex-1 flex-col border-l-4 border-double border-[#6d6d6d] pt-px font-['Liberation_Sans','Noto_Sans_CJK_JP',sans-serif]">
          <Toolbar />
          <HubTable />
          <FilterBar />
          <CourseMap />
          <MapBar />
        </main>
      </div>
      <Taskbar />
    </div>
  );
}
